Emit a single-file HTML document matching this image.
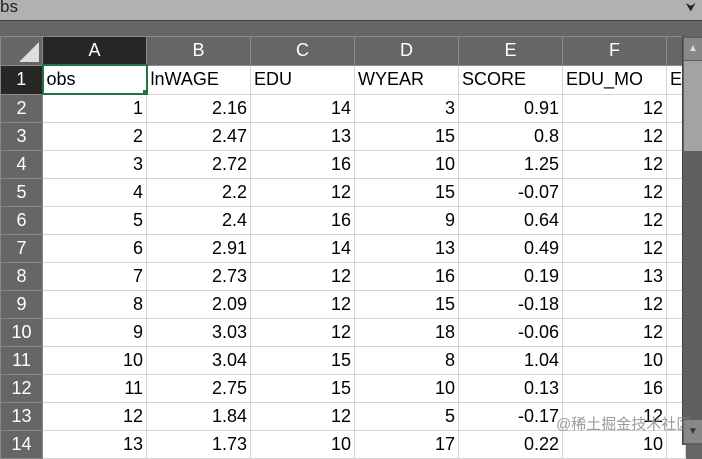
<!DOCTYPE html><html><head><style>
body{margin:0;width:702px;height:445px;overflow:hidden;background:#666;font-family:"Liberation Sans","Noto Sans CJK SC",sans-serif;position:relative}
.top{position:absolute;left:0;top:0;width:702px;height:20px;background:#b1b1b1;border-bottom:1px solid #444;color:#222;font-size:17px;line-height:14px}
table{position:absolute;left:0;top:36px;border-collapse:collapse;table-layout:fixed}
td{height:27px;border:1px solid #d4d4d4;padding:0 3px;font-size:18px;color:#000;background:#fff;white-space:nowrap;overflow:hidden;text-align:right}
td.h{background:#666;color:#fff;text-align:center;border-color:#888}
tr.ch td{background:#666;color:#fff;text-align:center;border-color:#8a8a8a;font-size:18px}
td.sel{background:#262626!important}
td.l{text-align:left}
.sb{position:absolute;left:682px;top:36px;width:20px;height:409px;background:#5f5f5f;border-left:1px solid #444}
</style></head><body>
<div class="top">bs<span style="position:absolute;right:6px;top:0;font-size:12px">&#x2B9F;</span></div>
<table>
<colgroup><col style="width:42px"><col style="width:104px"><col style="width:104px"><col style="width:104px"><col style="width:104px"><col style="width:104px"><col style="width:104px"><col style="width:16px"></colgroup>
<tr class="ch"><td style="background:#666;position:relative"><svg style="position:absolute;right:3px;bottom:3px" width="20" height="20"><polygon points="20,0 20,20 0,20" fill="#ddd"/></svg></td><td class="sel">A</td><td>B</td><td>C</td><td>D</td><td>E</td><td>F</td><td></td></tr>
<tr><td class="h sel">1</td><td class="l" style="border:2px solid #217346;position:relative">obs<span style="position:absolute;right:-4px;bottom:-4px;width:6px;height:6px;background:#217346;border:1px solid #fff"></span></td><td class="l">lnWAGE</td><td class="l">EDU</td><td class="l">WYEAR</td><td class="l">SCORE</td><td class="l">EDU_MO</td><td class="l">E</td></tr>
<tr><td class="h">2</td><td>1</td><td>2.16</td><td>14</td><td>3</td><td>0.91</td><td>12</td><td></td></tr>
<tr><td class="h">3</td><td>2</td><td>2.47</td><td>13</td><td>15</td><td>0.8</td><td>12</td><td></td></tr>
<tr><td class="h">4</td><td>3</td><td>2.72</td><td>16</td><td>10</td><td>1.25</td><td>12</td><td></td></tr>
<tr><td class="h">5</td><td>4</td><td>2.2</td><td>12</td><td>15</td><td>-0.07</td><td>12</td><td></td></tr>
<tr><td class="h">6</td><td>5</td><td>2.4</td><td>16</td><td>9</td><td>0.64</td><td>12</td><td></td></tr>
<tr><td class="h">7</td><td>6</td><td>2.91</td><td>14</td><td>13</td><td>0.49</td><td>12</td><td></td></tr>
<tr><td class="h">8</td><td>7</td><td>2.73</td><td>12</td><td>16</td><td>0.19</td><td>13</td><td></td></tr>
<tr><td class="h">9</td><td>8</td><td>2.09</td><td>12</td><td>15</td><td>-0.18</td><td>12</td><td></td></tr>
<tr><td class="h">10</td><td>9</td><td>3.03</td><td>12</td><td>18</td><td>-0.06</td><td>12</td><td></td></tr>
<tr><td class="h">11</td><td>10</td><td>3.04</td><td>15</td><td>8</td><td>1.04</td><td>10</td><td></td></tr>
<tr><td class="h">12</td><td>11</td><td>2.75</td><td>15</td><td>10</td><td>0.13</td><td>16</td><td></td></tr>
<tr><td class="h">13</td><td>12</td><td>1.84</td><td>12</td><td>5</td><td>-0.17</td><td>12</td><td></td></tr>
<tr><td class="h">14</td><td>13</td><td>1.73</td><td>10</td><td>17</td><td>0.22</td><td>10</td><td></td></tr>
</table>
<div class="sb">
<div style="position:absolute;left:1px;top:2px;width:18px;height:22px;background:#888;color:#ddd;font-size:10px;text-align:center;line-height:22px">&#9650;</div>
<div style="position:absolute;left:1px;top:25px;width:18px;height:90px;background:#a3a3a3"></div>
<div style="position:absolute;left:1px;top:384px;width:18px;height:23px;background:#888;color:#333;font-size:10px;text-align:center;line-height:23px">&#9660;</div>
</div>
<div style="position:absolute;left:556px;top:413px;font-size:15px;color:rgba(130,130,130,0.8)">@稀土掘金技术社区</div>
</body></html>
